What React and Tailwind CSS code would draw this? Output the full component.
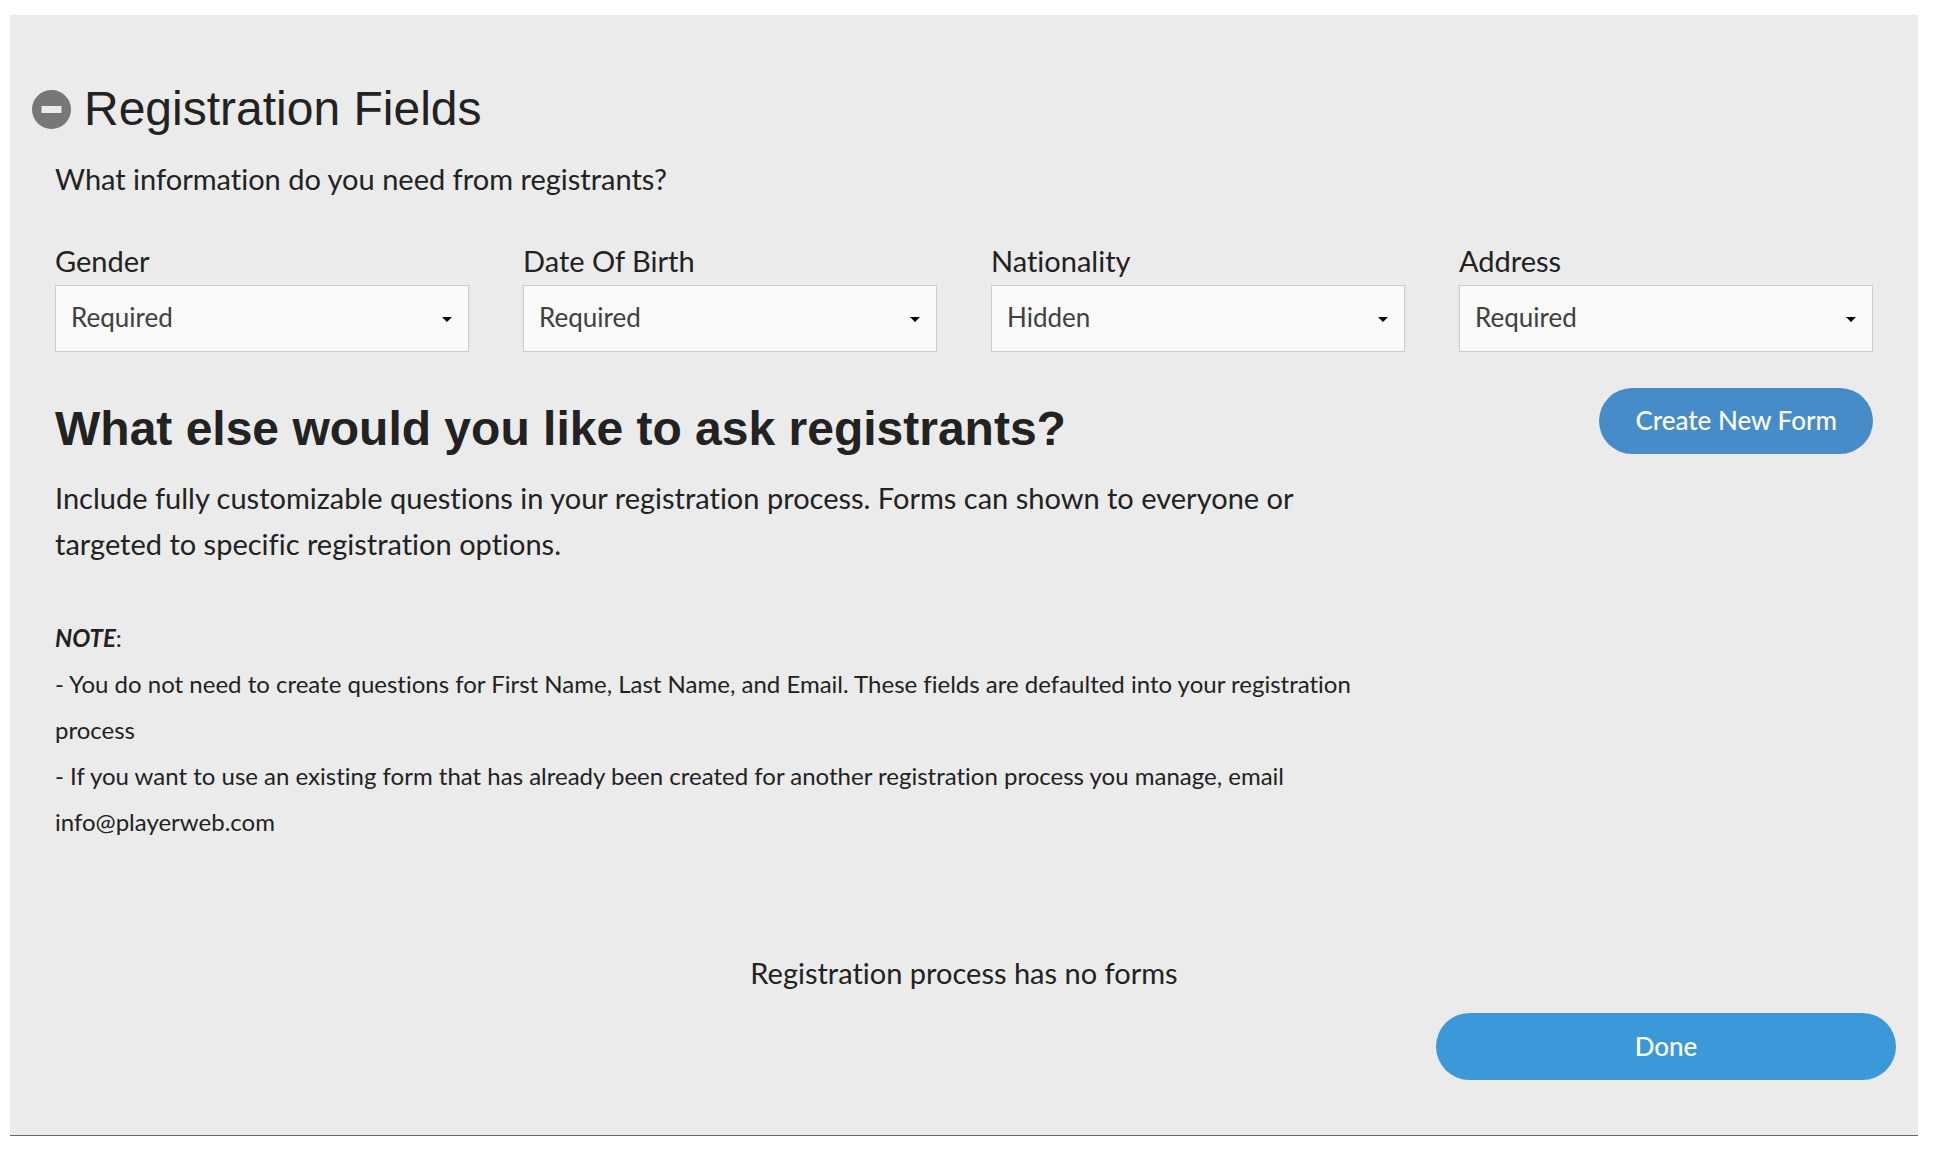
/**
 * RegistrationFields — Collapsible settings panel for what registrants are asked.
 */
import { useState } from 'react';

const VISIBILITY = ['Required', 'Optional', 'Hidden'];

const FIELDS = [
    { id: 'gender', label: 'Gender', value: 'Required' },
    { id: 'dob', label: 'Date Of Birth', value: 'Required' },
    { id: 'nationality', label: 'Nationality', value: 'Hidden' },
    { id: 'address', label: 'Address', value: 'Required' },
];

function FieldSelect({ id, label, value, onChange }) {
    return (
        <div className="flex flex-col gap-px">
            <label htmlFor={id}>{label}</label>
            <div className="relative">
                <select
                    id={id}
                    value={value}
                    onChange={(e) => onChange(id, e.target.value)}
                    className="block w-full h-[67px] px-[15px] pb-1 appearance-none bg-[#fafafa] border border-[#cccccc] text-[26px] text-[#404040]"
                >
                    {VISIBILITY.map(option => (
                        <option key={option}>{option}</option>
                    ))}
                </select>
                <svg viewBox="0 0 10 5" className="absolute right-[17px] top-8 w-[10px] h-[5px] pointer-events-none">
                    <path d="M0 0h10L5 5z" fill="#000" />
                </svg>
            </div>
        </div>
    );
}

export default function App() {
    const [isOpen, setIsOpen] = useState(true);
    const [values, setValues] = useState(
        Object.fromEntries(FIELDS.map(f => [f.id, f.value]))
    );

    const updateField = (id, value) => setValues({ ...values, [id]: value });

    return (
        <main className="mt-[15px] ml-[10px] mr-9 pt-[66px] pb-[55px] bg-[#ebebeb] border-b border-[#666666] font-['Lato',sans-serif] text-[29px] leading-[46px] text-[#222222] [font-variant-ligatures:none]">
            <h2 className="flex items-center gap-[13px] pl-[22px] font-['Liberation_Sans',sans-serif] text-[48px] leading-[56px]">
                <button
                    aria-label="Toggle registration fields"
                    aria-expanded={isOpen}
                    onClick={() => setIsOpen(!isOpen)}
                >
                    <svg viewBox="0 0 39 39" className="block w-[39px] h-[39px]">
                        <circle cx="19.5" cy="19.5" r="19.5" fill="#777" />
                        <path d="M9.5 16h20v7h-20z" fill="#ebebeb" />
                    </svg>
                </button>
                Registration Fields
            </h2>

            {isOpen && (
                <div className="pt-[19px] px-[45px]">
                    <p>What information do you need from registrants?</p>

                    <div className="grid grid-cols-4 gap-[54px] mt-9">
                        {FIELDS.map(field => (
                            <FieldSelect
                                key={field.id}
                                id={field.id}
                                label={field.label}
                                value={values[field.id]}
                                onChange={updateField}
                            />
                        ))}
                    </div>

                    <div className="grid grid-cols-4 gap-[54px] mt-9">
                        <div className="col-span-3 pt-[13px]">
                            <h3 className="font-['Liberation_Sans',sans-serif] text-[48px] leading-[56px] font-bold">
                                What else would you like to ask registrants?
                            </h3>
                            <p className="mt-[18px]">
                                Include fully customizable questions in your registration process. Forms can shown to everyone or targeted to specific registration options.
                            </p>
                            <div className="mt-12 text-[24px]">
                                <p><strong><em>NOTE</em></strong>:</p>
                                <p>- You do not need to create questions for First Name, Last Name, and Email. These fields are defaulted into your registration process</p>
                                <p>- If you want to use an existing form that has already been created for another registration process you manage, email info@playerweb.com</p>
                            </div>
                        </div>
                        <button className="justify-self-end self-start h-[66px] px-9 pb-[2px] rounded-full bg-[#468cc8] text-[26px] font-medium text-white whitespace-nowrap">
                            Create New Form
                        </button>
                    </div>

                    <p className="mt-[105px] text-center">Registration process has no forms</p>
                </div>
            )}

            <div className="flex justify-end mt-[17px] pr-[22px]">
                <button className="w-[460px] h-[67px] pb-[2px] rounded-full bg-[#3b99d9] text-[26px] font-medium text-white">
                    Done
                </button>
            </div>
        </main>
    );
}
